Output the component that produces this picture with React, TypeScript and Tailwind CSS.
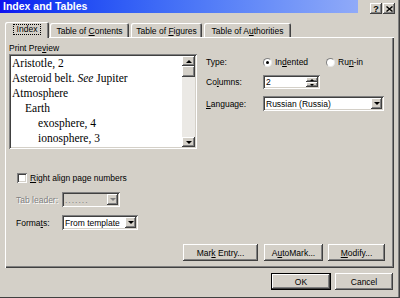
import type { ReactNode } from "react";

const raised =
  "shadow-[inset_-1px_-1px_#404040,inset_1px_1px_#ffffff,inset_-2px_-2px_#808080,inset_2px_2px_#d4d0c8]";
const sunken =
  "shadow-[inset_1px_1px_#808080,inset_-1px_-1px_#ffffff,inset_2px_2px_#404040,inset_-2px_-2px_#d4d0c8]";
const tabEdge =
  "shadow-[inset_1px_1px_#ffffff,inset_-1px_0_#404040,inset_-2px_0_#808080] rounded-t-[2px]";

function U({ children }: { children: ReactNode }) {
  return <span className="underline underline-offset-[1px]">{children}</span>;
}

function Arrow({ up, dim }: { up?: boolean; dim?: boolean }) {
  if (up)
    return <span className="w-0 h-0 border-x-[3px] border-x-transparent border-b-[3px] border-b-black" />;
  return (
    <span
      className={
        "w-0 h-0 border-x-[3px] border-x-transparent border-t-[3px] " +
        (dim ? "border-t-[#808080]" : "border-t-black")
      }
    />
  );
}

function DropBtn({ dim }: { dim?: boolean }) {
  return (
    <div className={`${raised} bg-[#d4d0c8] w-[11px] my-[2px] mr-[2px] flex items-center justify-center`}>
      <Arrow dim={dim} />
    </div>
  );
}

function Btn({ w, def, children }: { w: string; def?: boolean; children: ReactNode }) {
  const edge = def
    ? "shadow-[inset_0_0_0_1px_#000000,inset_-2px_-2px_#404040,inset_2px_2px_#ffffff,inset_-3px_-3px_#808080]"
    : raised;
  return (
    <div className={`${edge} ${w} h-[17px] flex items-center justify-center bg-[#d4d0c8]`}>
      <span>{children}</span>
    </div>
  );
}

function Radio({ on }: { on?: boolean }) {
  return (
    <span className="w-[9px] h-[9px] rounded-full bg-white border border-[#808080] border-r-[#e8e8e8] border-b-[#e8e8e8] flex items-center justify-center shrink-0">
      {on && <span className="w-[3px] h-[3px] rounded-full bg-black" />}
    </span>
  );
}

// classic Win2000 "Index and Tables" dialog
export default function App() {
  return (
    <div
      className="w-[400px] h-[298px] bg-[#d4d0c8] text-black text-[8.5px] leading-[10px] overflow-hidden shadow-[inset_-1px_-1px_#404040,inset_-2px_0_#808080]"
      style={{ fontFamily: '"Liberation Sans", Arial, sans-serif' }}
    >
      {/* title bar */}
      <div className="flex h-[14px]">
        <div className="w-[358px] h-[13px] bg-linear-to-r from-[#1010f0] to-[#90aaf8] text-white font-bold text-[10.5px] leading-[13px] pl-[3px]">
          Index and Tables
        </div>
        <div className="ml-auto mr-[5px] mt-[3px] flex gap-[1px]">
          <div className={`${raised} w-[12px] h-[11px] flex items-center justify-center font-bold text-[9px]`}>?</div>
          <div className={`${raised} w-[12px] h-[11px] flex items-center justify-center`}>
            <svg width="7" height="6" viewBox="0 0 7 6">
              <path d="M0.5 0.5 L6.5 5.5 M6.5 0.5 L0.5 5.5" stroke="#000" strokeWidth="1.4" />
            </svg>
          </div>
        </div>
      </div>

      {/* tabs */}
      <div className="mt-[8px] h-[15px] flex items-end">
        <div className={`${tabEdge} relative z-10 ml-[5px] w-[44px] h-[16px] -mb-px bg-[#d4d0c8] flex items-center justify-center pb-[1px]`}>
          <span className="border border-dotted border-black px-[3px] h-[11px] leading-[9px]">Index</span>
        </div>
        <div className={`${tabEdge} ml-[1px] w-[79px] h-[14px] flex items-center justify-center pt-[1px]`}>
          <span>
            Table of <U>C</U>ontents
          </span>
        </div>
        <div className={`${tabEdge} ml-[2px] w-[71px] h-[14px] flex items-center justify-center pt-[1px]`}>
          <span>
            Table of <U>F</U>igures
          </span>
        </div>
        <div className={`${tabEdge} ml-[2px] w-[87px] h-[14px] flex items-center justify-center pt-[1px]`}>
          <span>
            Table of A<U>u</U>thorities
          </span>
        </div>
      </div>

      {/* panel */}
      <div className="ml-[5px] w-[389px] h-[231px] shadow-[inset_1px_1px_#ffffff,inset_-1px_-1px_#404040,inset_-2px_-2px_#808080]">
        <div className="flex pt-[6px] pl-[4px]">
          <div className="w-[188px]">
            <div className="h-[11px]">
              Print Pre<U>v</U>iew
            </div>
            <div className={`${sunken} bg-white h-[95px] flex`}>
              <div
                className="flex-1 pl-[3px] pt-[2px] text-[11.5px] leading-[15px] overflow-hidden"
                style={{ fontFamily: '"Liberation Serif", "Times New Roman", serif' }}
              >
                <div>Aristotle, 2</div>
                <div>
                  Asteroid belt. <i>See</i> Jupiter
                </div>
                <div>Atmosphere</div>
                <div className="pl-[13px]">Earth</div>
                <div className="pl-[26px]">exosphere, 4</div>
                <div className="pl-[26px]">ionosphere, 3</div>
              </div>
              <div className="w-[13px] my-[2px] mr-[2px] flex flex-col">
                <div className={`${raised} bg-[#d4d0c8] h-[10px] flex items-center justify-center`}>
                  <Arrow up />
                </div>
                <div className={`${raised} bg-[#d4d0c8] h-[11px]`} />
                <div className="flex-1 bg-[#ebe9e5]" />
                <div className={`${raised} bg-[#d4d0c8] h-[10px] flex items-center justify-center`}>
                  <Arrow />
                </div>
              </div>
            </div>
          </div>

          <div className="ml-[9px] pt-[12px]">
            <div className="flex items-center h-[14px]">
              <span className="w-[57px]">Type:</span>
              <div className="w-[63px] flex items-center gap-[3px]">
                <Radio on />
                <span>
                  In<U>d</U>ented
                </span>
              </div>
              <div className="flex items-center gap-[3px]">
                <Radio />
                <span>
                  Ru<U>n</U>-in
                </span>
              </div>
            </div>
            <div className="flex items-center h-[14px] mt-[6px]">
              <span className="w-[57px]">
                Co<U>l</U>umns:
              </span>
              <div className={`${sunken} bg-white w-[57px] h-full flex`}>
                <span className="flex-1 pl-[3px] self-center">2</span>
                <div className="w-[12px] my-[2px] mr-[2px] flex flex-col">
                  <div className={`${raised} bg-[#d4d0c8] flex-1 flex items-center justify-center`}>
                    <span className="w-0 h-0 border-x-[2px] border-x-transparent border-b-[2px] border-b-black" />
                  </div>
                  <div className={`${raised} bg-[#d4d0c8] flex-1 flex items-center justify-center`}>
                    <span className="w-0 h-0 border-x-[2px] border-x-transparent border-t-[2px] border-t-black" />
                  </div>
                </div>
              </div>
            </div>
            <div className="flex items-center h-[15px] mt-[7px]">
              <span className="w-[57px]">
                <U>L</U>anguage:
              </span>
              <div className={`${sunken} bg-white w-[121px] h-full flex`}>
                <span className="flex-1 pl-[3px] self-center">Russian (Russia)</span>
                <DropBtn />
              </div>
            </div>
          </div>
        </div>

        <div className="mt-[24px] ml-[12px] flex items-center h-[10px]">
          <span className={`${sunken} bg-white w-[10px] h-[10px]`} />
          <span className="ml-[3px]">
            <U>R</U>ight align page numbers
          </span>
        </div>

        <div className="mt-[9px] ml-[11px] flex items-center h-[15px]">
          <span className="w-[46px] text-[#808080] [text-shadow:1px_1px_#ffffff]">Tab leader:</span>
          <div className={`${sunken} bg-[#d4d0c8] w-[58px] h-full flex`}>
            <span className="flex-1 pl-[3px] self-center text-[#808080] tracking-[1px]">.......</span>
            <DropBtn dim />
          </div>
        </div>

        <div className="mt-[8px] ml-[11px] flex items-center h-[15px]">
          <span className="w-[46px]">
            Forma<U>t</U>s:
          </span>
          <div className={`${sunken} bg-white w-[76px] h-full flex`}>
            <span className="flex-1 pl-[3px] self-center">From template</span>
            <DropBtn />
          </div>
        </div>

        <div className="mt-[14px] ml-[178px] flex">
          <Btn w="w-[75px]">
            Mar<U>k</U> Entry...
          </Btn>
          <div className="ml-[6px]">
            <Btn w="w-[59px]">
              A<U>u</U>toMark...
            </Btn>
          </div>
          <div className="ml-[5px]">
            <Btn w="w-[57px]">
              <U>M</U>odify...
            </Btn>
          </div>
        </div>
      </div>

      <div className="mt-[5px] ml-[271px] flex">
        <Btn w="w-[60px]" def>
          OK
        </Btn>
        <div className="ml-[4px]">
          <Btn w="w-[58px]">Cancel</Btn>
        </div>
      </div>
    </div>
  );
}
